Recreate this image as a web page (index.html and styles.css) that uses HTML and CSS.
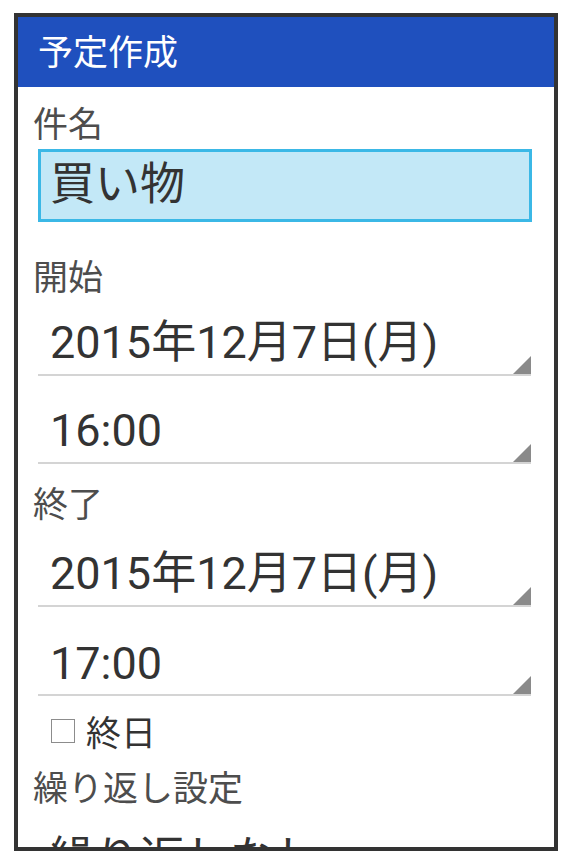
FILE: index.html
```html
<!DOCTYPE html>
<html lang="ja">

<head>
    <meta charset="UTF-8">
    <meta name="viewport" content="width=device-width, initial-scale=1.0">
    <title>予定作成</title>
    <link rel="stylesheet" href="styles.css">
</head>

<body>
    <div class="frame">
        <div class="header">予定作成</div>
        <div class="content">
            <div class="label label-name">件名</div>
            <div class="input">買い物</div>

            <div class="label label-start">開始</div>
            <div class="field date-start"><span class="value">2015年12月7日(月)</span><span class="corner"></span></div>
            <div class="field time-start"><span class="value">16:00</span><span class="corner"></span></div>

            <div class="label label-end">終了</div>
            <div class="field date-end"><span class="value">2015年12月7日(月)</span><span class="corner"></span></div>
            <div class="field time-end"><span class="value">17:00</span><span class="corner"></span></div>

            <div class="allday"><span class="check"></span><span>終日</span></div>

            <div class="label label-repeat">繰り返し設定</div>
            <div class="field repeat"><span class="value">繰り返しなし</span></div>
        </div>
    </div>
</body>

</html>
```

FILE: styles.css
```css
body {
    margin: 0;
    background-color: #fff;
    font-family: Roboto, "Noto Sans CJK JP", sans-serif;
}

.frame {
    box-sizing: border-box;
    width: 544px;
    height: 838px;
    margin: 13px 0 0 14px;
    border: 4px solid #333;
    overflow: hidden;
    background-color: #fff;
}

.header {
    height: 70px;
    line-height: 73px;
    padding-left: 20px;
    background-color: #1f50be;
    color: #fff;
    font-size: 35px;
    overflow: hidden;
}

.content {
    display: flex;
    flex-direction: column;
}

.label {
    height: 40px;
    line-height: 40px;
    padding-left: 15px;
    font-size: 35px;
    color: #4d4d4d;
}

.label-name {
    margin-top: 19px;
}

.label-start {
    margin-top: 37px;
}

.label-end {
    margin-top: 22px;
}

.label-repeat {
    margin-top: 20px;
}

.input {
    box-sizing: border-box;
    height: 73px;
    margin: 3px 22px 0 20px;
    padding-left: 9px;
    border: 3px solid #3bb8e6;
    background-color: #c3e8f7;
    line-height: 66px;
    font-size: 45px;
    color: #333;
}

.field {
    position: relative;
    margin: 0 23px 0 20px;
    padding: 0 0 1px 12px;
    border-bottom: 2px solid #d4d4d4;
}

.field .value {
    display: block;
    height: 60px;
    line-height: 60px;
    font-size: 45px;
    color: #333;
    white-space: nowrap;
}

.field .corner {
    position: absolute;
    right: 0;
    bottom: 0;
    width: 0;
    height: 0;
    border-left: 18px solid transparent;
    border-bottom: 18px solid #8a8a8a;
}

.date-start {
    padding-top: 14px;
}

.time-start {
    padding-top: 25px;
}

.date-end {
    padding-top: 18px;
}

.time-end {
    padding-top: 27px;
    padding-bottom: 0;
}

.repeat {
    padding-top: 19px;
    border-bottom: none;
}

.allday {
    display: flex;
    align-items: center;
    height: 40px;
    margin-top: 14px;
    padding-left: 33px;
    font-size: 35px;
    color: #333;
}

.check {
    box-sizing: border-box;
    width: 24px;
    height: 24px;
    margin: 2px 11px 0 0;
    border: 1.5px solid #8c8c8c;
}
```
